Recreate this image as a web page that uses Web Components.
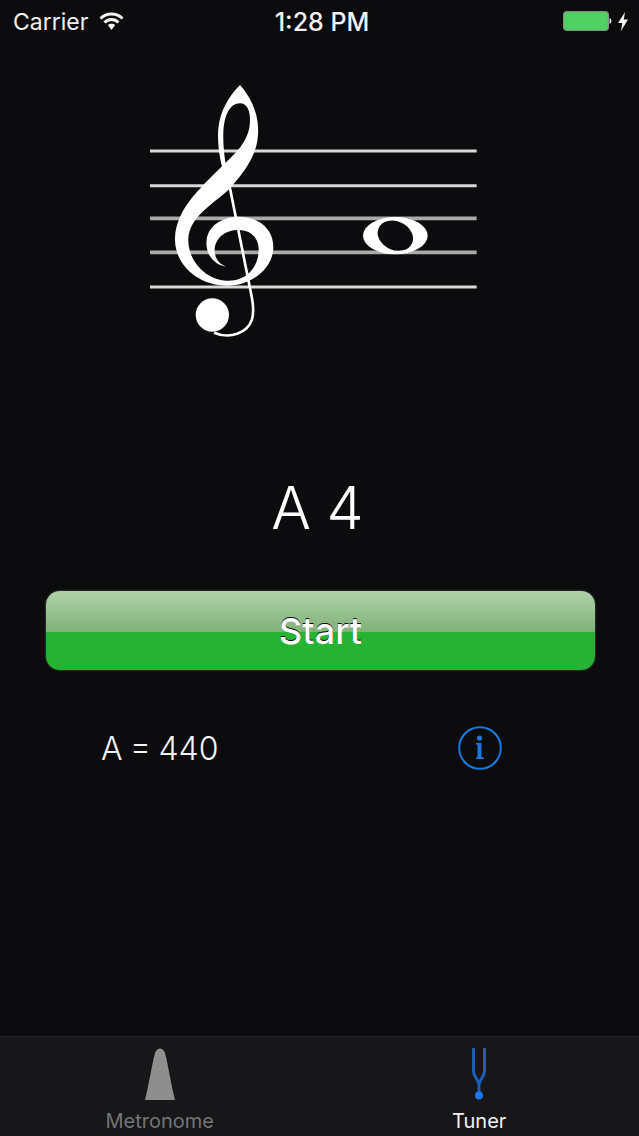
<!DOCTYPE html>
<html>
<head>
<meta charset="utf-8">
<title>Tuner</title>
<style>
  html, body { margin: 0; height: 100%; background: #0c0c0e; }
  body { font-family: Inter, "Noto Sans", sans-serif; color: #fff; }
  tuner-app { height: 1136px; }
</style>
</head>
<body>
<tuner-app>
  <status-bar carrier="Carrier" time="1:28 PM"></status-bar>
  <staff-view></staff-view>
  <note-label>A 4</note-label>
  <glossy-button>Start</glossy-button>
  <pitch-row>A = 440</pitch-row>
  <tab-bar>
    <tab-item label="Metronome">
      <svg width="32" height="53" viewBox="0 0 32 53">
        <path d="M1 52 C5 36 8 16 11 5 C13 -1 19 -1 21 5 C24 16 27 36 31 52 Z" fill="#8e8e8e"/>
      </svg>
    </tab-item>
    <tab-item label="Tuner" active>
      <svg width="16" height="53" viewBox="0 0 16 53">
        <path d="M2.500 0 V23 C2.500 30 8 31 8 37 C8 31 13.500 30 13.500 23 V0 M8 37 V46" fill="none" stroke="#1a5fb8" stroke-width="3"/>
        <circle cx="8" cy="47.500" r="4" fill="#1a78e8"/>
      </svg>
    </tab-item>
  </tab-bar>
</tuner-app>

<script>
class TunerApp extends HTMLElement {
  constructor() {
    super();
    this.attachShadow({ mode: 'open' });
    this.shadowRoot.innerHTML = `
      <style>
        :host { display: flex; flex-direction: column; background: #0c0c0e; overflow: hidden; }
        ::slotted(tab-bar) { margin-top: auto; }
      </style>
      <slot></slot>
    `;
  }
}

class StatusBar extends HTMLElement {
  constructor() {
    super();
    this.attachShadow({ mode: 'open' });
    this.shadowRoot.innerHTML = `
      <style>
        :host { display: grid; grid-template-columns: 1fr auto 1fr; align-items: center; height: 44px; padding: 0 11px 0 13px; font-size: 23px; color: #f2f2f2; }
        .left { display: flex; align-items: center; gap: 11px; }
        .right { display: flex; align-items: center; justify-content: flex-end; gap: 6px; }
        #time { font-size: 25px; font-weight: 500; margin-left: 3px; }
        svg { display: block; margin-bottom: 2px; }
      </style>
      <div class="left">
        <span id="carrier"></span>
        <svg width="25" height="18" viewBox="0 0 25 18">
          <path d="M1.500 6.500 C7.500 0.500 17.500 0.500 23.500 6.500" fill="none" stroke="#f2f2f2" stroke-width="3"/>
          <path d="M5.500 10.500 C9.500 6.500 15.500 6.500 19.500 10.500" fill="none" stroke="#f2f2f2" stroke-width="3"/>
          <path d="M8.800 13 C10.800 11.200 14.200 11.200 16.200 13 L12.500 18 Z" fill="#f2f2f2"/>
        </svg>
      </div>
      <span id="time"></span>
      <div class="right">
        <svg width="49" height="20" viewBox="0 0 49 20">
          <rect x="0.600" y="0.600" width="44.800" height="18.800" rx="3.500" fill="#4fd263" stroke="#7f947f" stroke-width="1.200"/>
          <path d="M46.500 7 C49 7.500 49 12.500 46.500 13 Z" fill="#e4e4e4"/>
        </svg>
        <svg width="10" height="19" viewBox="0 0 10 19">
          <path d="M7 0 L0 11 H4.200 L3 19 L10 7.500 H5.800 Z" fill="#f2f2f2"/>
        </svg>
      </div>
    `;
  }

  connectedCallback() {
    this.shadowRoot.querySelector('#carrier').textContent = this.getAttribute('carrier');
    this.shadowRoot.querySelector('#time').textContent = this.getAttribute('time');
  }
}

class StaffView extends HTMLElement {
  constructor() {
    super();
    this.attachShadow({ mode: 'open' });
    // coordinates are 3x the screen, easier to read off a zoomed crop
    this.shadowRoot.innerHTML = `
      <style>
        :host { display: block; height: 280px; margin-top: 26px; padding-left: 140px; }
        svg { display: block; filter: blur(0.5px); }
      </style>
      <svg width="350" height="280" viewBox="0 0 1050 840">
        <g stroke="#d8d8d8" stroke-width="9">
          <path d="M30 243 H1010"/>
          <path d="M30 347 H1010"/>
          <path d="M30 445 H1010" stroke="#aaa" stroke-width="11"/>
          <path d="M30 547 H1010" stroke="#aaa" stroke-width="11"/>
          <path d="M30 651 H1010"/>
        </g>
        <path fill="#fff" d="M300 45 C335 85 358 135 354 195 C350 260 310 310 265 360 C215 405 150 440 145 505 C142 570 195 630 262 632 C320 634 356 590 356 540 C356 500 330 478 290 480 C250 482 222 510 224 545 C226 565 235 580 258 590 C215 582 195 545 200 510 C205 465 250 440 295 440 C360 440 402 480 400 535 C397 600 330 647 262 647 C170 647 103 580 105 505 C108 420 175 360 240 295 C285 250 330 215 330 150 C330 120 320 100 300 100 C270 100 252 135 250 190 C249 220 252 250 258 290 L246 290 C236 250 232 210 235 175 C240 125 265 80 300 45 Z"/>
        <path fill="none" stroke="#fff" stroke-width="8" d="M255 280 L325 630 C335 680 345 715 336 748 C322 790 270 808 222 788"/>
        <circle cx="217" cy="735" r="50" fill="#fff"/>
        <ellipse cx="766" cy="497" rx="97" ry="56" fill="#fff"/>
        <ellipse cx="766" cy="497" rx="55" ry="43" transform="rotate(25 766 497)" fill="#0c0c0e"/>
      </svg>
    `;
  }
}

class NoteLabel extends HTMLElement {
  constructor() {
    super();
    this.attachShadow({ mode: 'open' });
    this.shadowRoot.innerHTML = `
      <style>
        :host { display: block; margin-top: 122px; height: 72px; line-height: 72px; text-align: center; font-size: 59px; font-weight: 300; word-spacing: -1px; padding-right: 4px; }
      </style>
      <slot></slot>
    `;
  }
}

class GlossyButton extends HTMLElement {
  constructor() {
    super();
    this.attachShadow({ mode: 'open' });
    this.shadowRoot.innerHTML = `
      <style>
        :host { display: block; margin: 47px 44px 0 46px; }
        button {
          display: block; width: 100%; height: 79px; padding: 0; border: 0; border-radius: 14px;
          background: linear-gradient(#afd2a9 0, #7fb179 41px, #26b233 41px, #26b233 100%);
          box-shadow: 0 0 2px #777;
          color: #fff; font: 500 36px Inter, "Noto Sans", sans-serif;
          text-shadow: 0 -1.500px 0 #000;
        }
      </style>
      <button><slot></slot></button>
    `;
  }
}

class PitchRow extends HTMLElement {
  constructor() {
    super();
    this.attachShadow({ mode: 'open' });
    this.shadowRoot.innerHTML = `
      <style>
        :host { display: flex; align-items: center; justify-content: space-between; margin-top: 55px; padding: 0 137px 0 101px; font-size: 32px; font-weight: 300; word-spacing: -1.500px; height: 46px; color: #f4f4f4; }
        svg { display: block; }
      </style>
      <span><slot></slot></span>
      <svg width="44" height="44" viewBox="0 0 44 44" fill="#1a78e0">
        <circle cx="22" cy="22" r="20.800" fill="none" stroke="#1a78e0" stroke-width="2"/>
        <circle cx="21.500" cy="12" r="2.600"/>
        <path d="M18 17 H23.500 V31.500 H26 V33 H18 V31.500 H19.500 V18.500 H18 Z"/>
      </svg>
    `;
  }
}

class TabBar extends HTMLElement {
  constructor() {
    super();
    this.attachShadow({ mode: 'open' });
    this.shadowRoot.innerHTML = `
      <style>
        :host { display: grid; grid-template-columns: 1fr 1fr; height: 99px; background: #17171a; border-top: 1px solid #232325; }
      </style>
      <slot></slot>
    `;
  }
}

class TabItem extends HTMLElement {
  constructor() {
    super();
    this.attachShadow({ mode: 'open' });
    this.shadowRoot.innerHTML = `
      <style>
        :host { display: flex; flex-direction: column; align-items: center; padding-top: 11px; color: #747476; font-size: 20px; }
        :host([active]) { color: #f2f2f2; }
        .icon { height: 53px; }
        .label { margin-top: 8px; line-height: 24px; }
      </style>
      <div class="icon"><slot></slot></div>
      <div class="label"></div>
    `;
  }

  connectedCallback() {
    this.shadowRoot.querySelector('.label').textContent = this.getAttribute('label');
  }
}

customElements.define('tuner-app', TunerApp);
customElements.define('status-bar', StatusBar);
customElements.define('staff-view', StaffView);
customElements.define('note-label', NoteLabel);
customElements.define('glossy-button', GlossyButton);
customElements.define('pitch-row', PitchRow);
customElements.define('tab-bar', TabBar);
customElements.define('tab-item', TabItem);
</script>
</body>
</html>
